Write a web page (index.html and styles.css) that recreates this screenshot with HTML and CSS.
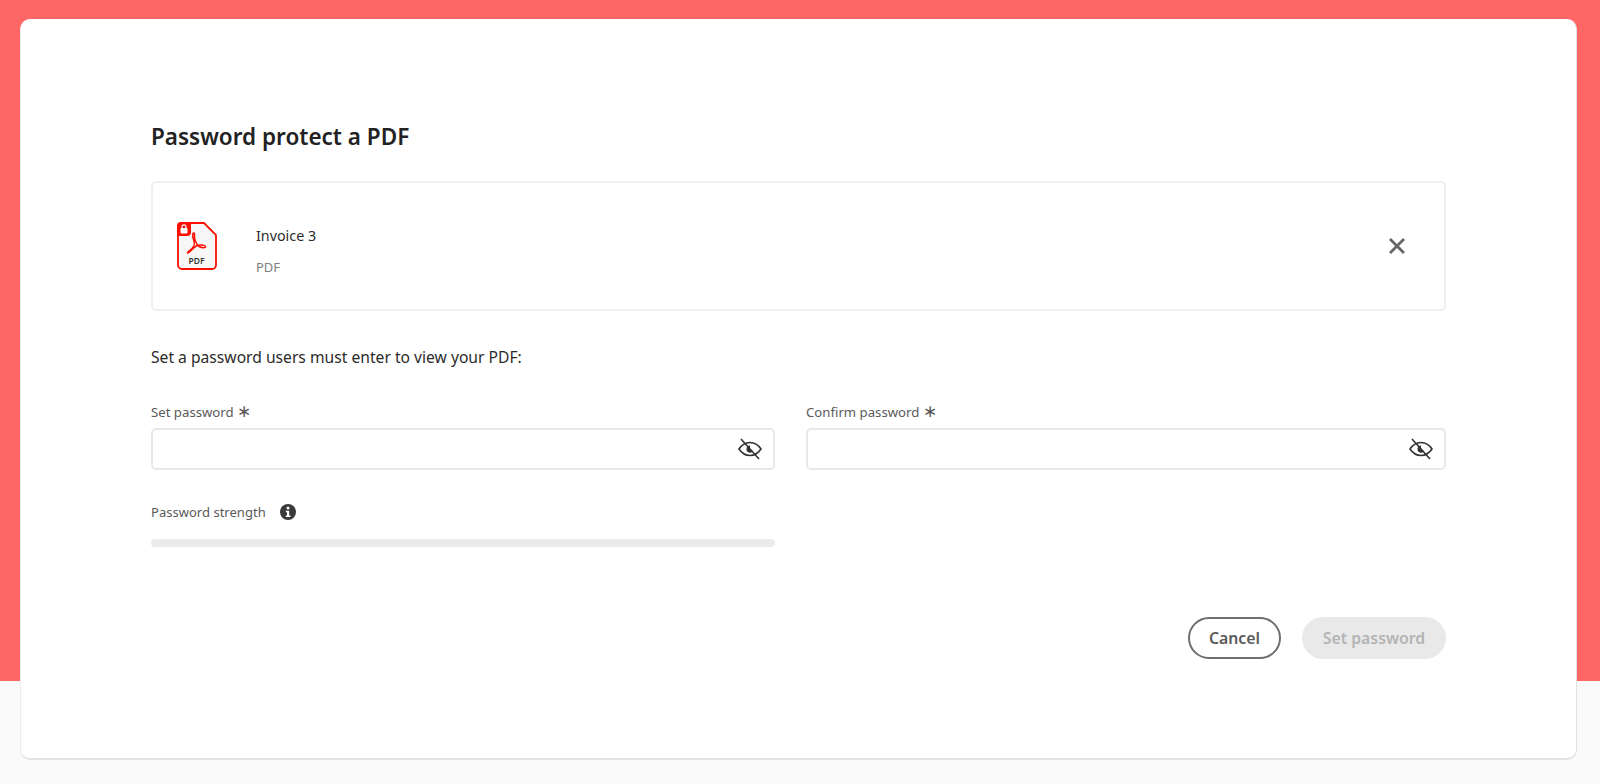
FILE: index.html
```html
<!DOCTYPE html>
<html lang="en">
<head>
<meta charset="utf-8">
<title>Password protect a PDF</title>
<link rel="stylesheet" href="styles.css">
</head>
<body>
<main class="card">
  <h1 class="title">Password protect a PDF</h1>
  <section class="file">
    <svg class="pdf-icon" width="40" height="48" viewBox="0 0 40 48" aria-hidden="true">
      <path d="M5 1H27L39 13V43A4 4 0 0 1 35 47H5A4 4 0 0 1 1 43V5A4 4 0 0 1 5 1Z" fill="#f7f7f7" stroke="#fa0f00" stroke-width="1.800"/>
      <path d="M4 0H14V10A4 4 0 0 1 10 14H0V4A4 4 0 0 1 4 0Z" fill="#fa0f00"/>
      <rect x="3.500" y="6" width="7" height="5.500" rx="1" fill="#fff"/>
      <path d="M5 6.500V4.800A2 2 0 0 1 9 4.800V6.500" fill="none" stroke="#fff" stroke-width="1.200"/>
      <path d="M17 11C15 11 15.500 15 17 19C18.500 23 15 27 12 29C9.500 31 10.500 31.500 12 30.500C15 28 17 25 20 23.500C23 22.500 28 23 28.500 24.500C29 26 25 26 22 24.500C19 22 17 17 17.500 13C17.700 11.500 17.500 11 17 11Z" fill="none" stroke="#fa0f00" stroke-width="1.500"/>
      <text class="pdf-icon-text" x="19.500" y="41.500" text-anchor="middle">PDF</text>
    </svg>
    <div class="file-info">
      <div class="file-name">Invoice 3</div>
      <div class="file-type">PDF</div>
    </div>
    <svg class="close" width="18" height="18" viewBox="0 0 18 18" aria-hidden="true">
      <path d="M2 2L16 16M16 2L2 16" stroke="#666" stroke-width="2.800" fill="none"/>
    </svg>
  </section>
  <p class="lead">Set a password users must enter to view your PDF:</p>
  <div class="fields">
    <div class="field">
      <label class="label">Set password <span class="req">∗</span></label>
      <div class="input">
        <svg class="eye" width="26" height="24" viewBox="0 0 26 24" aria-hidden="true">
          <path d="M2 12C5 7.500 9 5.500 13 5.500S21 7.500 24 12C21 16.500 17 18.500 13 18.500S5 16.500 2 12Z" fill="none" stroke="#333" stroke-width="1.600"/>
          <path d="M13 8.500A3.500 3.500 0 0 0 9.500 12A3.500 3.500 0 0 0 16 14L13 12Z" fill="#333"/>
          <path d="M4 2L22 22" stroke="#333" stroke-width="1.600"/>
        </svg>
      </div>
    </div>
    <div class="field">
      <label class="label">Confirm password <span class="req">∗</span></label>
      <div class="input">
        <svg class="eye" width="26" height="24" viewBox="0 0 26 24" aria-hidden="true">
          <path d="M2 12C5 7.500 9 5.500 13 5.500S21 7.500 24 12C21 16.500 17 18.500 13 18.500S5 16.500 2 12Z" fill="none" stroke="#333" stroke-width="1.600"/>
          <path d="M13 8.500A3.500 3.500 0 0 0 9.500 12A3.500 3.500 0 0 0 16 14L13 12Z" fill="#333"/>
          <path d="M4 2L22 22" stroke="#333" stroke-width="1.600"/>
        </svg>
      </div>
    </div>
  </div>
  <div class="strength">
    <div class="strength-label">
      <span>Password strength</span>
      <svg width="18" height="18" viewBox="0 0 18 18" aria-hidden="true">
        <circle cx="9" cy="9" r="8" fill="#3a3a3a"/>
        <circle cx="9" cy="5" r="1.500" fill="#fff"/>
        <path d="M6.800 7.800H10.200V12.500H11.500V14H6.800V12.500H8V9.300H6.800Z" fill="#fff"/>
      </svg>
    </div>
    <div class="bar"></div>
  </div>
  <div class="actions">
    <button class="btn btn-cancel" type="button">Cancel</button>
    <button class="btn btn-set" type="button" disabled>Set password</button>
  </div>
</main>
</body>
</html>
```
FILE: styles.css
```css
* { box-sizing: border-box; }
html, body { margin: 0; height: 100%; }
body {
  background: linear-gradient(to bottom, #ff6666 0, #ff6666 681px, #fafafa 681px);
  font-family: "Noto Sans", "Open Sans", sans-serif;
  color: #2c2c2c;
  padding: 19px 23px 0 20px;
  height: 784px;
  overflow: hidden;
}
.card {
  height: 741px;
  background: #fff;
  border-radius: 10px;
  border: 1px solid #e2e2e2;
  border-top-color: #fff;
  border-left-color: #ececec;
  border-width: 1px 1px 2px 1px;
  padding: 100px 130px 0 130px;
}
.title {
  margin: 0;
  font-size: 22.500px;
  line-height: 34px;
  font-weight: 600;
  color: #222;
}
.file {
  margin-top: 27px;
  height: 130px;
  border: 2px solid #efefef;
  border-radius: 5px;
  display: flex;
  align-items: center;
  padding: 0 38px 0 24px;
}
.pdf-icon { flex: none; }
.pdf-icon-text { font-family: "Noto Sans", sans-serif; font-size: 8.500px; font-weight: 600; fill: #333; }
.file-info { flex: 1; margin-left: 39px; padding-top: 9px; }
.file-name { font-size: 14.300px; line-height: 22px; color: #2c2c2c; }
.file-type { font-size: 13px; line-height: 18px; color: #808080; margin-top: 11px; }
.close { flex: none; }
.lead {
  margin: 35px 0 0;
  font-size: 15.650px;
  line-height: 22px;
  color: #2c2c2c;
}
.fields {
  display: grid;
  grid-template-columns: 624px 640px;
  column-gap: 31px;
  margin-top: 34px;
}
.label {
  display: block;
  font-size: 13.200px;
  line-height: 20px;
  color: #5a5a5a;
}
.req { font-size: 17px; line-height: 14px; }
.input {
  margin-top: 6px;
  height: 42px;
  border: 2px solid #e8e8e8;
  border-radius: 5px;
  display: flex;
  align-items: center;
  justify-content: flex-end;
  padding-right: 10px;
}
.strength { width: 624px; margin-top: 31px; }
.strength-label {
  display: flex;
  align-items: center;
  gap: 13px;
  font-size: 13.050px;
  line-height: 22px;
  color: #5a5a5a;
}
.bar {
  margin-top: 16px;
  height: 8px;
  border-radius: 4px;
  background: #ebebeb;
}
.actions {
  display: flex;
  justify-content: flex-end;
  gap: 21px;
  margin-top: 70px;
}
.btn {
  height: 42px;
  border-radius: 21px;
  font-family: inherit;
  font-size: 15.800px;
  font-weight: 600;
  padding: 0;
}
.btn-cancel {
  width: 93px;
  background: #fff;
  border: 2px solid #6e6e6e;
  color: #5a5a5a;
}
.btn-set {
  width: 144px;
  background: #e9e9e9;
  border: 0;
  color: #b4b4b4;
}
```
